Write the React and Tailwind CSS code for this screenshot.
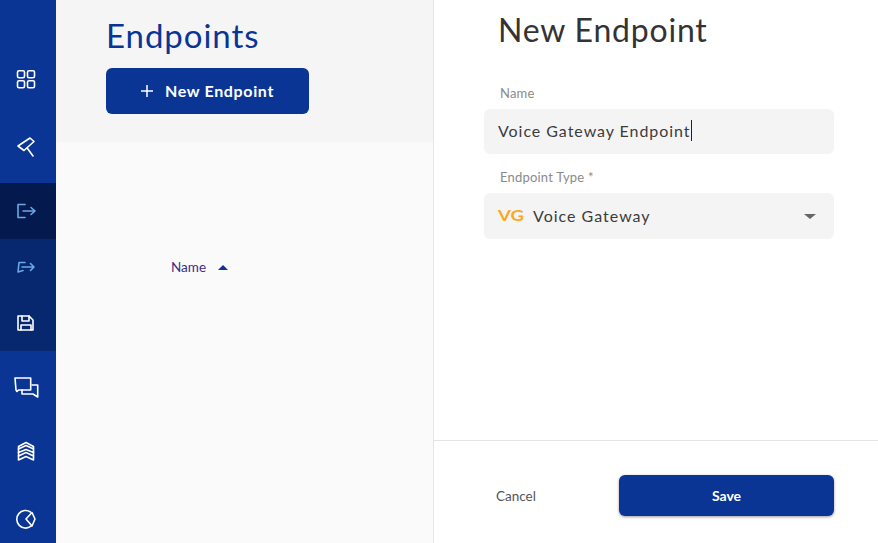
const ICONS = {
  grid: <><rect x="3.500" y="3.700" width="7" height="7" rx="1.500" /><rect x="13.500" y="3.700" width="7" height="7" rx="1.500" /><rect x="3.500" y="13.700" width="7" height="7" rx="1.500" /><rect x="13.500" y="13.700" width="7" height="7" rx="1.500" /></>,
  hammer: <><path d="M4 15 16 7l4 3.500L10 19.500z" /><path d="M13.500 17.500l5.500 7.500" /></>,
  exit: <><path d="M11 5.500H4v13h7" /><path d="M9 12h12M17 8.500l4 3.500-4 3.500" /></>,
  forward: <><path d="M11 7.500H5l-1 9.500 5-1.500" /><path d="M8 12h12M16.500 8.500 20 12l-3.500 3.500" /></>,
  save: <><path d="M4 5h11l4 4v10H4z" /><path d="M8 5v5h7V5M7 19v-5h10v5" /></>,
  chat: <><path d="M1 3h15.700v12H4.500L3 16.500 2 15z" /><path d="M8 15v4h11l4.700 3V10H18" /></>,
  layers: <><path d="M4.500 7.500 12 3.500l7.500 4V10L12 6.500 4.500 10z" /><path d="M4.500 10v3.500l7.500-3 7.500 3V10" /><path d="M4.500 13.500V17L12 13.500l7.500 3.500v-3.500" /><path d="M4.500 17v4l7.500-3.500 7.500 3.500v-4" /></>,
  pie: <><path d="M16.500 5A8.800 8.800 0 1 0 17 19.200" /><path d="M12 12l6-6.500 3 6.500-3 7z" /></>,
}

function Ico({ name, className }) {
  return (
    <svg className={`overflow-visible ${className}`} viewBox="0 0 24 24" fill="none" stroke="currentColor" strokeWidth="1.600" strokeLinejoin="round" strokeLinecap="round">
      {ICONS[name]}
    </svg>
  )
}

function NavItem({ icon, h = 'h-16', bg = '', color = 'text-white' }) {
  return (
    <div className={`flex items-center justify-center pr-1 ${h} ${bg} ${color}`}>
      <Ico name={icon} className="h-6 w-6" />
    </div>
  )
}

function Sidebar() {
  return (
    <aside className="w-14 shrink-0 overflow-hidden bg-[#0a3595] pt-[47px]">
      <NavItem icon="grid" />
      <NavItem icon="hammer" />
      <div className="mt-2 mb-1">
        <NavItem icon="exit" h="h-14" bg="bg-[#041a4e]" color="text-[#6aa9e6]" />
        <NavItem icon="forward" h="h-14" bg="bg-[#07276f]" color="text-[#6aa9e6]" />
        <NavItem icon="save" h="h-14" bg="bg-[#07276f]" />
      </div>
      <NavItem icon="chat" />
      <NavItem icon="layers" />
      <NavItem icon="pie" h="h-[72px]" />
    </aside>
  )
}

function Field({ label, children }) {
  return (
    <div>
      <div className="mb-[7px] pl-4 text-[13px] leading-[17px] tracking-[0.2px] text-[#8a8a8a]">{label}</div>
      {children}
    </div>
  )
}

export default function App() {
  return (
    <div className="flex h-screen overflow-hidden bg-white font-['Lato','Liberation_Sans',sans-serif]">
      <Sidebar />

      {/* list side */}
      <section className="flex w-[378px] shrink-0 flex-col border-r border-[#e6e6e6] bg-[#fafafa]">
        <div className="h-[142px] bg-[#f5f5f5] pl-[50px] pt-[15px]">
          <h1 className="text-[33px] leading-[41px] tracking-[0.95px] text-[#0a3595]">Endpoints</h1>
          <button className="mt-3 flex h-[46px] w-[203px] items-center justify-center gap-[12px] rounded-md bg-[#0a3595] pb-px text-base font-bold tracking-[0.65px] text-white">
            <svg className="h-3 w-3" viewBox="0 0 12 12" stroke="currentColor" strokeWidth="1.500"><path d="M6 0v12M0 6h12" /></svg>
            New Endpoint
          </button>
        </div>
        <div className="flex items-center gap-[12px] pl-[115px] pt-[115px] text-[13.5px] leading-5 text-[#3a2f86]">
          Name
          <span className="h-0 w-0 border-x-[5px] border-b-[5px] border-x-transparent border-b-[#0a3595]" />
        </div>
      </section>

      {/* new endpoint form */}
      <section className="flex min-w-0 flex-1 flex-col">
        <div className="flex-1 pl-[50px] pr-11">
          <h2 className="ml-[14px] pt-[9px] text-[32px] leading-[41px] tracking-[0.8px] text-[#333333]">New Endpoint</h2>
          <div className="mt-[35px] flex flex-col gap-[15px]">
            <Field label="Name">
              <div className="flex h-[45px] items-center rounded-md bg-[#f4f4f4] pb-[2px] pl-[14px] text-base tracking-[0.95px] text-[#3c3c3c]">
                Voice Gateway Endpoint
                <span className="h-[21px] w-px bg-[#222222]" />
              </div>
            </Field>
            <Field label="Endpoint Type *">
              <div className="flex h-[46px] items-center rounded-md bg-[#f4f4f4] pl-[14px] pr-[18px] text-base tracking-[1px] text-[#3c3c3c]">
                <span className="w-[35px] origin-left scale-x-[1.2] text-[15.5px] font-bold leading-none tracking-normal text-[#f9a825]">VG</span>
                Voice Gateway
                <span className="ml-auto h-0 w-0 border-x-[6px] border-t-[5px] border-x-transparent border-t-[#666666]" />
              </div>
            </Field>
          </div>
        </div>
        <div className="flex h-[103px] items-start border-t border-[#e4e4e4] pl-[62px] pr-11 pt-[34px]">
          <button className="h-[41px] pt-[2px] text-[13.5px] text-[#555555]">Cancel</button>
          <button className="ml-auto h-[41px] w-[215px] rounded-md bg-[#0a3595] text-sm font-bold text-white shadow-[0_1px_3px_rgba(0,0,0,0.4)]">Save</button>
        </div>
      </section>
    </div>
  )
}
